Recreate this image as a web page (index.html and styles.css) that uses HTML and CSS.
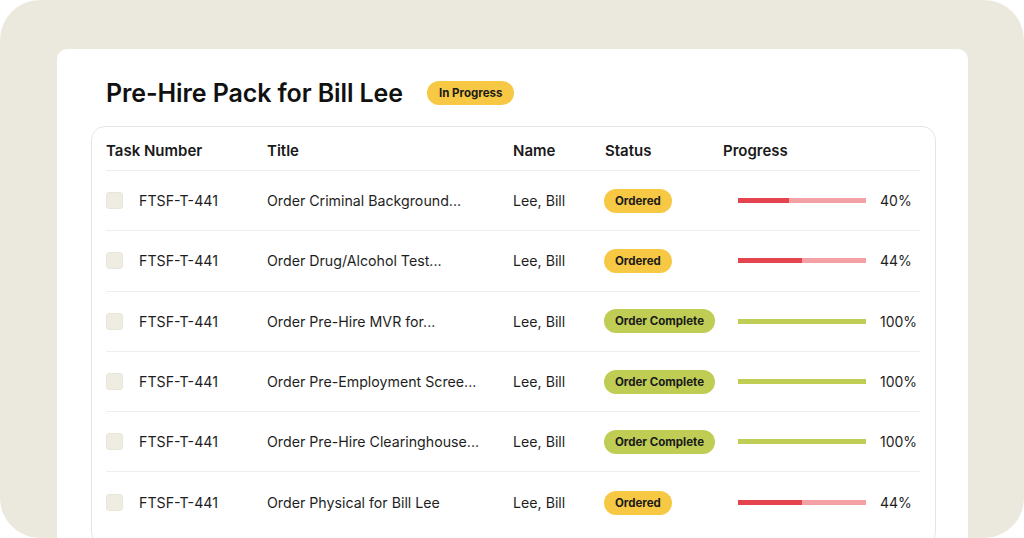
FILE: index.html
```html
<!DOCTYPE html>
<html>
<head>
<meta charset="utf-8">
<link rel="stylesheet" href="styles.css">
</head>
<body>
<div class="canvas">
  <div class="card">
    <div class="head">
      <h1 class="title">Pre-Hire Pack for Bill Lee</h1>
      <span class="badge yellow">In Progress</span>
    </div>
    <div class="table">
      <div class="row header">
        <div>Task Number</div>
        <div>Title</div>
        <div>Name</div>
        <div>Status</div>
        <div>Progress</div>
      </div>
      <div class="row">
        <div class="task"><span class="check"></span>FTSF-T-441</div>
        <div>Order Criminal Background...</div>
        <div>Lee, Bill</div>
        <div><span class="pill yellow">Ordered</span></div>
        <div class="prog"><span class="bar red"><span class="fill" style="width:40%"></span></span><span class="pct">40%</span></div>
      </div>
      <div class="row">
        <div class="task"><span class="check"></span>FTSF-T-441</div>
        <div>Order Drug/Alcohol Test...</div>
        <div>Lee, Bill</div>
        <div><span class="pill yellow">Ordered</span></div>
        <div class="prog"><span class="bar red"><span class="fill" style="width:50%"></span></span><span class="pct">44%</span></div>
      </div>
      <div class="row">
        <div class="task"><span class="check"></span>FTSF-T-441</div>
        <div>Order Pre-Hire MVR for...</div>
        <div>Lee, Bill</div>
        <div><span class="pill green">Order Complete</span></div>
        <div class="prog"><span class="bar green"><span class="fill" style="width:100%"></span></span><span class="pct">100%</span></div>
      </div>
      <div class="row">
        <div class="task"><span class="check"></span>FTSF-T-441</div>
        <div>Order Pre-Employment Scree...</div>
        <div>Lee, Bill</div>
        <div><span class="pill green">Order Complete</span></div>
        <div class="prog"><span class="bar green"><span class="fill" style="width:100%"></span></span><span class="pct">100%</span></div>
      </div>
      <div class="row">
        <div class="task"><span class="check"></span>FTSF-T-441</div>
        <div>Order Pre-Hire Clearinghouse...</div>
        <div>Lee, Bill</div>
        <div><span class="pill green">Order Complete</span></div>
        <div class="prog"><span class="bar green"><span class="fill" style="width:100%"></span></span><span class="pct">100%</span></div>
      </div>
      <div class="row last">
        <div class="task"><span class="check"></span>FTSF-T-441</div>
        <div>Order Physical for Bill Lee</div>
        <div>Lee, Bill</div>
        <div><span class="pill yellow">Ordered</span></div>
        <div class="prog"><span class="bar red"><span class="fill" style="width:50%"></span></span><span class="pct">44%</span></div>
      </div>
    </div>
  </div>
</div>
</body>
</html>
```
FILE: styles.css
```css
* { box-sizing: border-box; }
html, body { margin: 0; padding: 0; background: #ffffff; }
body { font-family: Inter, "Noto Sans", sans-serif; color: #1c1c1c; }
.canvas {
  width: 1024px;
  height: 538px;
  background: #ebe9de;
  border-radius: 40px;
  overflow: hidden;
  padding: 49px 0 0 57px;
}
.card {
  width: 911px;
  height: 520px;
  background: #ffffff;
  border-radius: 10px;
  padding: 29px 32px 0 34px;
}
.head {
  display: flex;
  align-items: center;
  gap: 24px;
  padding-left: 15px;
  height: 30px;
}
.title {
  margin: 0;
  font-size: 25px;
  font-weight: 600;
  letter-spacing: -0.1px;
  color: #111111;
  line-height: 30px;
}
.badge {
  display: inline-flex;
  align-items: center;
  height: 24px;
  padding: 0 12px;
  border-radius: 12px;
  font-size: 11.5px;
  font-weight: 700;
  color: #1a1a1a;
}
.yellow { background: #f6c843; }
.green { background: #bfcd55; }
.table {
  margin-top: 18px;
  width: 845px;
  height: 420px;
  border: 1px solid #e4e4e4;
  border-radius: 14px;
  padding: 0 15px 0 14px;
}
.row {
  display: grid;
  grid-template-columns: 161px 246px 92px 118px 1fr;
  align-items: center;
  height: 60.3px;
  border-bottom: 1px solid #eeeeee;
  font-size: 14.2px;
  color: #1e1e1e;
}
.row.header {
  height: 44px;
  padding-top: 4px;
  font-size: 15px;
  font-weight: 600;
  color: #1a1a1a;
}
.row.last { border-bottom: none; }
.task { display: flex; align-items: center; gap: 16px; }
.check {
  width: 17px;
  height: 17px;
  border-radius: 3px;
  background: #efede2;
  border: 1px solid #e8e6da;
}
.pill {
  display: inline-flex;
  align-items: center;
  height: 24px;
  padding: 0 11px;
  border-radius: 12px;
  font-size: 11.5px;
  font-weight: 700;
  color: #1a1a1a;
  margin-left: -1px;
}
.prog { display: flex; align-items: center; padding-left: 15px; gap: 14px; }
.bar {
  display: block;
  width: 128px;
  height: 5px;
}
.bar.red { background: #f4a1a5; }
.bar.green { background: #bfcd55; }
.fill { display: block; height: 100%; }
.bar.red .fill { background: #e4444e; }
.bar.green .fill { background: #bfcd55; }
.pct { font-size: 14px; color: #1e1e1e; }
```
